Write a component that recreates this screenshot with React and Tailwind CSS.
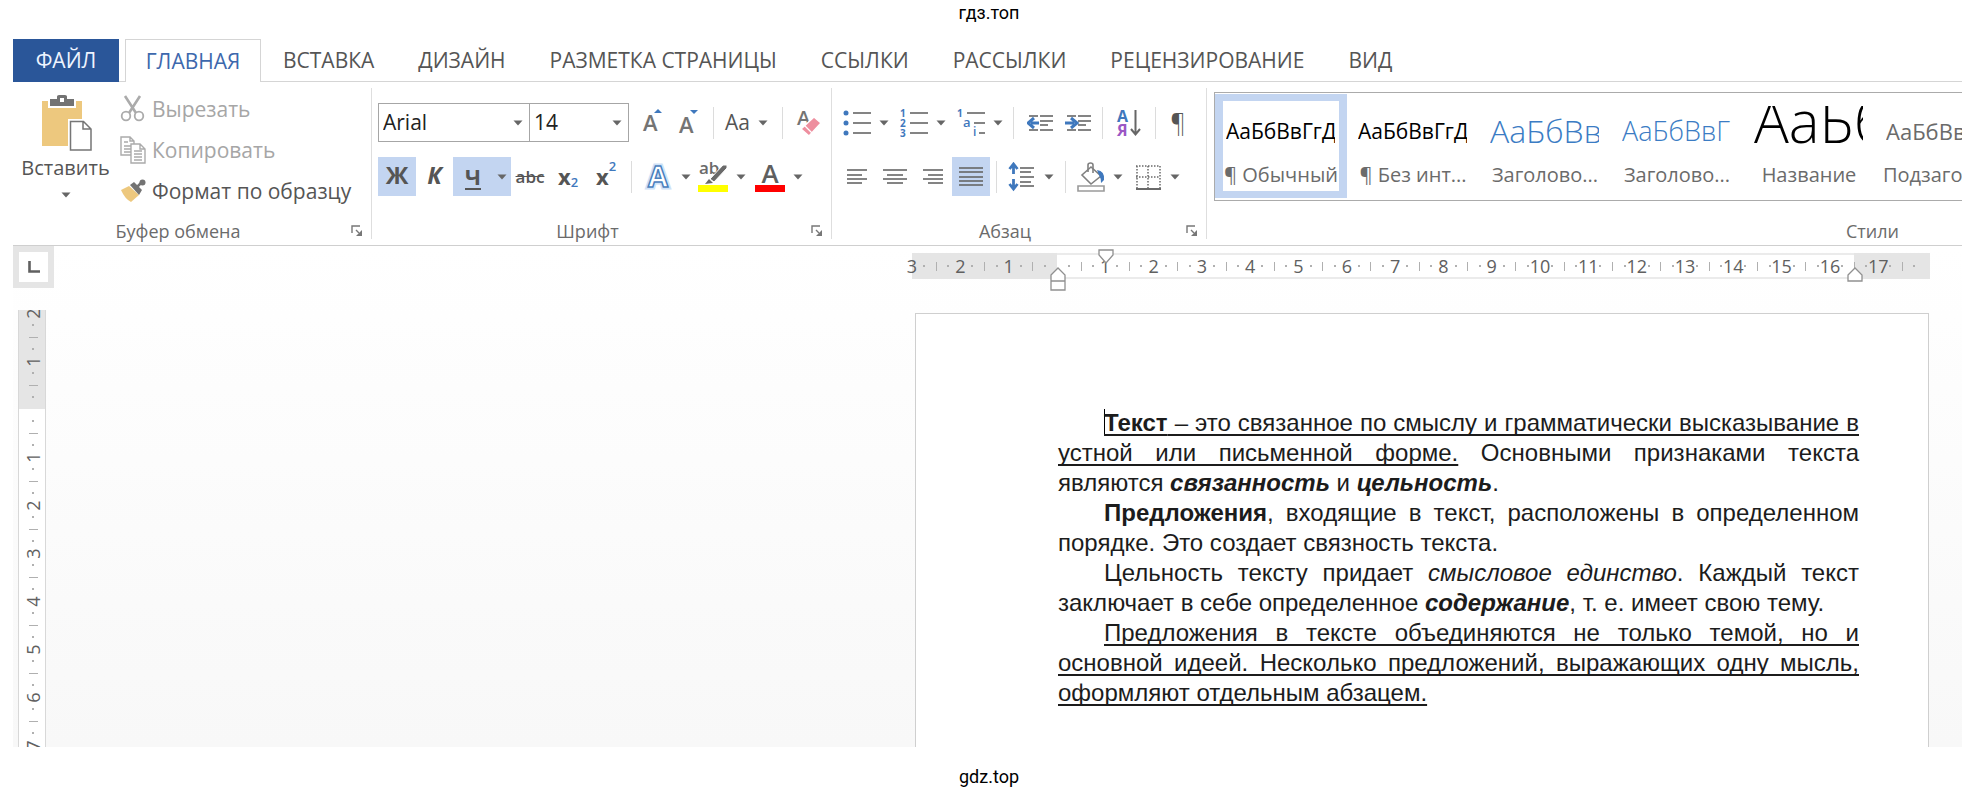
import clsx from "clsx";

const blue = "#3f78bd";
const ink = "#666666";

const tabs = ["ВСТАВКА", "ДИЗАЙН", "РАЗМЕТКА СТРАНИЦЫ", "ССЫЛКИ", "РАССЫЛКИ", "РЕЦЕНЗИРОВАНИЕ", "ВИД"];

const styles = [
  { name: "¶ Обычный", preview: "text-[21px] leading-[50px] text-black", selected: true },
  { name: "¶ Без инт...", preview: "text-[21px] leading-[50px] text-black" },
  { name: "Заголово...", preview: "text-[32px] leading-[50px] font-light text-[#3b7cc4]" },
  { name: "Заголово...", preview: "text-[27px] leading-[50px] font-light text-[#3b7cc4]" },
  { name: "Название", preview: "text-[58px] leading-[30px] font-light text-black" },
  { name: "Подзаголовок", preview: "text-[22px] leading-[50px] text-[#6b6b6b]" },
];

function Arrow({ className }) {
  return (
    <svg width="10" height="6" viewBox="0 0 10 6" className={clsx("shrink-0", className)} aria-hidden="true">
      <path d="M0.5 0.5h9L5 5.5z" fill={ink} />
    </svg>
  );
}

function Separator({ className = "mx-[6px]" }) {
  return <div className={clsx("h-8 w-px shrink-0 bg-[#dcdcdc]", className)} />;
}

function Tool({ label, active, wide, className = "w-[38px]", children }) {
  return (
    <button
      type="button"
      aria-label={label}
      className={clsx(
        "flex h-[39px] shrink-0 items-center text-[#555]",
        wide ? "gap-2 pl-[5px]" : "justify-center",
        active && "bg-[#c3d5f1]",
        className
      )}
    >
      {children}
      {wide && <Arrow />}
    </button>
  );
}

function Group({ label, className, bodyClass, children }) {
  return (
    <section className={clsx("flex h-[151px] shrink-0 flex-col border-r border-[#dedede]", className)}>
      <div className={clsx("flex-1", bodyClass)}>{children}</div>
      <div className="flex h-4 items-center">
        <span className="flex-1 text-center text-[18px] leading-6 text-[#6b6b6b]">{label}</span>
        <button type="button" aria-label={`${label}: параметры`} className="flex w-7 justify-center">
          <svg width="12" height="12" viewBox="0 0 12 12" fill="none" stroke="#777" strokeWidth="1.4">
            <path d="M1 8V1h8M5 5l3 3" />
            <path d="M11 5v6H5z" fill="#777" stroke="none" />
          </svg>
        </button>
      </div>
    </section>
  );
}

function Combo({ label, value, className }) {
  return (
    <div className={clsx("relative h-[39px] shrink-0 border border-[#a6a6a6] bg-white", className)}>
      <select
        aria-label={label}
        defaultValue={value}
        className="h-full w-full appearance-none bg-transparent pl-1 text-[21px] text-[#222] outline-none"
      >
        <option>{value}</option>
      </select>
      <Arrow className="pointer-events-none absolute right-[6px] top-4" />
    </div>
  );
}

/* Horizontal strokes: [x1, x2, y] */
function Lines({ rows, width = 28, height = 30, children }) {
  return (
    <svg width={width} height={height} viewBox={`0 0 ${width} ${height}`} aria-hidden="true">
      {rows.map(([a, b, y]) => (
        <path key={`${a}-${y}`} d={`M${a} ${y}H${b}`} stroke={ink} strokeWidth="1.6" />
      ))}
      {children}
    </svg>
  );
}

function PasteIcon() {
  return (
    <svg width="52" height="58" viewBox="0 0 52 58" aria-hidden="true">
      <path d="M2 7h40v45H2z" fill="#edc87e" />
      <path d="M8 4h28v10H8z" fill="#fff" />
      <path d="M10 5h7V2.500q0-1.500 2-1.500h6q2 0 2 1.500V5h7v7H10z" fill="#737373" />
      <path d="M20 4h4v4h-4z" fill="#fff" />
      <path d="M28 25h17l7 8v25H28z" fill="#fff" />
      <path d="M30.500 27.500h13l7.500 7.500v21h-20.500zM43 27.500V35h8" fill="#fff" stroke="#767676" strokeWidth="1.500" />
    </svg>
  );
}

function CutIcon() {
  return (
    <svg width="26" height="27" viewBox="0 0 26 27" fill="none" stroke="#ababab" aria-hidden="true">
      <path d="M5 1l11 17M20 1L9 18" strokeWidth="2.600" />
      <circle cx="6" cy="21" r="4.300" strokeWidth="1.800" />
      <circle cx="19" cy="21" r="4.300" strokeWidth="1.800" />
    </svg>
  );
}

function CopyIcon() {
  return (
    <svg width="26" height="28" viewBox="0 0 26 28" fill="#fff" stroke="#ababab" strokeWidth="1.400" aria-hidden="true">
      <path d="M1 1h9l4 4v14H1zM10 1v4h4M4 6h4M4 10h7M4 13h7M4 16h7" />
      <path d="M11 8h9l5 5v14H11zM20 8v5h5M14 15h8M14 18h8M14 21h8M14 24h8" />
    </svg>
  );
}

function BrushIcon() {
  return (
    <svg width="26" height="24" viewBox="0 0 26 24" aria-hidden="true">
      <path d="M1 11l8-4 10 9-8 7q-6-3-10-12z" fill="#edc87e" />
      <path d="M10 6l4-3 8 8-3 5z" fill="#737373" />
      <path d="M17 8l5-5" stroke="#737373" strokeWidth="2.500" />
      <circle cx="22.500" cy="3.500" r="3" fill="#737373" />
    </svg>
  );
}

function FontSizeIcon({ up }) {
  return (
    <svg width="24" height="30" viewBox="0 0 24 30" aria-hidden="true">
      <text x="2" y={up ? 23 : 25} fontSize="22" fontWeight="600" fill="#747474">А</text>
      <path d={up ? "M13 5h8l-4-4z" : "M13 2h8l-4 4z"} fill={blue} />
    </svg>
  );
}

function EraserIcon() {
  return (
    <svg width="26" height="30" viewBox="0 0 26 30" aria-hidden="true">
      <text x="1" y="17" fontSize="20" fontWeight="600" fill="#747474">А</text>
      <path d="M5 21L18 9l7 6-12 13z" fill="#ee8f9f" stroke="#fff" strokeWidth="1.500" />
      <path d="M8 17l8 8" stroke="#fff" strokeWidth="1.200" />
    </svg>
  );
}

function TextEffectsIcon() {
  return (
    <svg width="30" height="32" viewBox="0 0 30 32" aria-hidden="true">
      <text x="15" y="26" textAnchor="middle" fontSize="29" fontWeight="700" fill="#fff" stroke="#cfe2f7" strokeWidth="5">А</text>
      <text x="15" y="26" textAnchor="middle" fontSize="29" fontWeight="700" fill="#fff" stroke="#4a80bd" strokeWidth="1.500">А</text>
    </svg>
  );
}

function HighlightIcon() {
  return (
    <svg width="30" height="32" viewBox="0 0 30 32" aria-hidden="true">
      <text x="1" y="13" fontSize="17" fontWeight="600" fill="#6a6a6a">ab</text>
      <path d="M12 18L25 4h4v3L16 21z" fill="#6a6a6a" stroke="#fff" strokeWidth="1" />
      <path d="M11 18l4 4-8 1z" fill="#6a6a6a" />
      <path d="M0 24h30v7H0z" fill="#ffff00" />
    </svg>
  );
}

function FontColorIcon() {
  return (
    <svg width="30" height="32" viewBox="0 0 30 32" aria-hidden="true">
      <text x="15" y="22" textAnchor="middle" fontSize="26" fontWeight="600" fill="#5f5f5f">А</text>
      <path d="M0 24h30v7H0z" fill="#ff0000" />
    </svg>
  );
}

const listRows = [[10, 28, 5], [10, 28, 15], [10, 28, 25]];

function BulletsIcon() {
  return (
    <Lines rows={listRows}>
      {[5, 15, 25].map((y) => <circle key={y} cx="3" cy={y} r="2.500" fill={blue} />)}
    </Lines>
  );
}

function NumbersIcon() {
  return (
    <Lines rows={listRows}>
      {[1, 2, 3].map((n) => (
        <text key={n} x="0" y={n * 10 - 1} fontSize="10" fontWeight="700" fill={blue}>{n}</text>
      ))}
    </Lines>
  );
}

function MultilevelIcon() {
  return (
    <Lines rows={[[10, 28, 5], [17, 28, 15], [22, 28, 25]]}>
      <text x="0" y="9" fontSize="10" fontWeight="700" fill={blue}>1</text>
      <text x="6" y="19" fontSize="13" fontWeight="600" fill={blue}>a</text>
      <text x="16" y="28" fontSize="12" fontWeight="600" fill={blue}>i</text>
    </Lines>
  );
}

function IndentIcon({ right }) {
  return (
    <Lines width={28} height={20} rows={[[2, 11, 3], [13, 26, 3], [13, 26, 8], [13, 21, 12], [2, 11, 17], [13, 26, 17]]}>
      <path
        d={right ? "M0 10h9M6 5l6 5-6 5" : "M12 10H4M7 5l-6 5 6 5"}
        fill="none"
        stroke={blue}
        strokeWidth="3"
      />
    </Lines>
  );
}

function SortIcon() {
  return (
    <svg width="26" height="30" viewBox="0 0 26 30" aria-hidden="true">
      <text x="1" y="14" fontSize="16" fontWeight="700" fill={blue}>А</text>
      <text x="1" y="28" fontSize="16" fontWeight="700" fill="#9a57c4">Я</text>
      <path d="M19.500 2v24M15 21l4.500 5.500L24 21" fill="none" stroke={ink} strokeWidth="2" />
    </svg>
  );
}

function SpacingIcon() {
  return (
    <Lines rows={[[12, 26, 6], [12, 23, 10], [12, 26, 15], [12, 23, 20], [12, 26, 24]]}>
      <path d="M5.500 2v10M1.500 7l4-5 4 5M5.500 17v10M1.500 22l4 5 4-5" fill="none" stroke={blue} strokeWidth="2.800" />
    </Lines>
  );
}

function BucketIcon() {
  return (
    <svg width="28" height="32" viewBox="0 0 28 32" fill="none" aria-hidden="true">
      <path d="M14 6l10 9-10 8-9-9z" fill="#fff" stroke="#808080" strokeWidth="1.600" />
      <path d="M11 11V4q0-2 2.500-2T16 4v8" stroke="#808080" strokeWidth="1.600" />
      <path d="M20 9q8 1 7 10l-3 3q0-5-2-8z" fill={blue} />
      <path d="M1 25h26v5H1z" fill="#fff" stroke="#9a9a9a" strokeWidth="1.600" />
    </svg>
  );
}

function BordersIcon() {
  return (
    <svg width="28" height="28" viewBox="0 0 28 28" fill="none" stroke="#6a6a6a" strokeWidth="1.500" aria-hidden="true">
      <path d="M2 3h24M2 14h24M3 3v22M14 3v22M26 3v22" strokeDasharray="1.500 1.500" />
      <path d="M2 26h25" strokeWidth="2" />
    </svg>
  );
}

const alignRows = {
  left: [[4, 24, 8], [4, 19, 13], [4, 24, 17], [4, 19, 21]],
  center: [[2, 26, 8], [6, 22, 13], [2, 26, 17], [6, 22, 21]],
  right: [[4, 24, 8], [9, 24, 13], [4, 24, 17], [9, 24, 21]],
  justify: [[2, 26, 6], [2, 26, 10], [2, 26, 15], [2, 26, 19], [2, 26, 23]],
};

function Tabs() {
  return (
    <nav className="flex h-[43px] items-stretch whitespace-nowrap text-[21px] leading-[42px] text-[#555]">
      <a href="#file" className="w-[106px] bg-[#2a5699] text-center text-[#eef4ff]">ФАЙЛ</a>
      <div className="w-[6px] border-b border-[#d5d5d5]" />
      <a href="#home" className="w-[136px] border border-b-0 border-[#d5d5d5] text-center text-[#3d68ad]">ГЛАВНАЯ</a>
      <div className="flex flex-1 gap-11 border-b border-[#d5d5d5] pl-[22px]">
        {tabs.map((t) => <a key={t} href="#tab">{t}</a>)}
      </div>
    </nav>
  );
}

function Clipboard() {
  return (
    <Group label="Буфер обмена" className="w-[359px]">
      <div className="flex">
        <button type="button" className="flex w-[105px] flex-col items-center pt-[6px] text-[20px] leading-6 text-[#555]">
          <PasteIcon />
          <span className="mt-1">Вставить</span>
          <Arrow className="mt-3" />
        </button>
        <div className="flex flex-col text-[21px] leading-6">
          {[
            ["Вырезать", <CutIcon />, "text-[#a6a6a6]"],
            ["Копировать", <CopyIcon />, "text-[#a6a6a6]"],
            ["Формат по образцу", <BrushIcon />, "text-[#555]"],
          ].map(([text, icon, color]) => (
            <button key={text} type="button" className={clsx("flex h-[41px] items-center gap-[6px] pl-[2px]", color)}>
              {icon}
              {text}
            </button>
          ))}
        </div>
      </div>
    </Group>
  );
}

function FontGroup() {
  return (
    <Group label="Шрифт" className="w-[460px]" bodyClass="pl-[6px]">
      <div className="flex items-center pt-[15px]">
        <Combo label="Шрифт" value="Arial" className="w-[152px]" />
        <Combo label="Размер шрифта" value="14" className="w-[99px] border-l-0" />
        <div className="w-[6px]" />
        <Tool label="Увеличить размер" className="w-9"><FontSizeIcon up /></Tool>
        <Tool label="Уменьшить размер" className="w-9"><FontSizeIcon /></Tool>
        <Separator />
        <Tool label="Регистр" wide className="w-14 text-[21px]">Аа</Tool>
        <Separator />
        <Tool label="Очистить форматирование" className="w-10"><EraserIcon /></Tool>
      </div>
      <div className="flex items-center pt-[15px]">
        <Tool active className="w-[38px] pb-1 text-[24px] leading-8 font-bold">Ж</Tool>
        <Tool className="w-[37px] pb-1 text-[24px] leading-8 font-bold italic">К</Tool>
        <Tool label="Подчеркнутый" active className="w-[58px] gap-4 pl-2 text-[22px] font-bold">
          <span className="border-b-2 border-[#555] leading-6">Ч</span>
          <Arrow />
        </Tool>
        <Tool className="w-[38px] text-[17px] font-semibold line-through">abc</Tool>
        <Tool label="Подстрочный" className="w-[38px] text-[22px] font-bold">
          x<span className="self-end pb-1 text-[13px] font-semibold text-[#3f78bd]">2</span>
        </Tool>
        <Tool label="Надстрочный" className="w-[38px] text-[22px] font-bold">
          x<span className="self-start text-[13px] font-semibold text-[#3f78bd]">2</span>
        </Tool>
        <Separator />
        <Tool label="Текстовые эффекты" wide className="w-[55px]"><TextEffectsIcon /></Tool>
        <Tool label="Цвет выделения" wide className="w-[57px]"><HighlightIcon /></Tool>
        <Tool label="Цвет текста" wide className="w-[57px]"><FontColorIcon /></Tool>
      </div>
    </Group>
  );
}

function ParagraphGroup() {
  return (
    <Group label="Абзац" className="w-[375px]" bodyClass="pl-[6px]">
      <div className="flex items-center pt-[15px]">
        <Tool label="Маркеры" wide className="w-[57px]"><BulletsIcon /></Tool>
        <Tool label="Нумерация" wide className="w-[57px]"><NumbersIcon /></Tool>
        <Tool label="Многоуровневый список" wide className="w-[57px]"><MultilevelIcon /></Tool>
        <Separator className="ml-1 mr-2" />
        <Tool label="Уменьшить отступ"><IndentIcon /></Tool>
        <Tool label="Увеличить отступ"><IndentIcon right /></Tool>
        <Separator className="mx-1" />
        <Tool label="Сортировка" className="w-11"><SortIcon /></Tool>
        <Separator className="mx-1" />
        <Tool className="w-9 text-[25px] font-light">¶</Tool>
      </div>
      <div className="flex items-center pt-[15px]">
        <Tool label="По левому краю"><Lines rows={alignRows.left} /></Tool>
        <Tool label="По центру"><Lines rows={alignRows.center} /></Tool>
        <Tool label="По правому краю"><Lines rows={alignRows.right} /></Tool>
        <Tool label="По ширине" active><Lines rows={alignRows.justify} /></Tool>
        <Separator />
        <Tool label="Интервал" wide className="w-14"><SpacingIcon /></Tool>
        <Separator />
        <Tool label="Заливка" wide className="w-[57px]"><BucketIcon /></Tool>
        <Tool label="Границы" wide className="w-[57px]"><BordersIcon /></Tool>
      </div>
    </Group>
  );
}

/* The gallery runs on past the right edge of the window */
function StylesGroup() {
  return (
    <div className="min-w-0 flex-1 overflow-hidden">
      <Group label="Стили" className="w-[1360px]" bodyClass="pl-[7px] pt-1">
        <div className="flex h-[109px] border border-[#ababab] pt-px">
          {styles.map((s, i) => (
            <button
              key={i}
              type="button"
              className={clsx(
                "flex h-[104px] w-[132px] shrink-0 flex-col border-x-8 border-y-[7px] whitespace-nowrap",
                s.selected ? "border-[#c3d5f1]" : "border-transparent"
              )}
            >
              <span className={clsx("mt-[5px] ml-[3px] h-11 w-[109px] shrink-0 overflow-hidden text-left", s.preview)}>
                АаБбВвГгДд
              </span>
              <span className="mt-[9px] w-full text-center text-[20px] leading-8 text-[#6b6b6b]">{s.name}</span>
            </button>
          ))}
        </div>
      </Group>
    </div>
  );
}

/* One slot per quarter centimetre, each mark centred on the slot's start */
function Mark({ quarter, vertical }) {
  const n = Math.abs(quarter / 4);
  const number = quarter % 4 === 0;
  if (number) return n === 0 ? null : <span className={vertical ? "-rotate-90" : undefined}>{n}</span>;
  const half = quarter % 2 === 0;
  return (
    <span
      className={clsx(
        "shrink-0 bg-[#b0b0b0]",
        half && (vertical ? "h-px w-[9px]" : "h-[9px] w-px"),
        !half && "size-[2px]"
      )}
    />
  );
}

function HorizontalRuler() {
  const quarters = Array.from({ length: 84 }, (_, i) => i - 12);
  return (
    <div className="relative flex h-[26px] text-[18px] text-[#606060]">
      {quarters.map((q) => (
        <div
          key={q}
          className={clsx("flex flex-1 items-center", q < 0 || q >= 66 ? "bg-[#e5e5e5]" : "border-y-2 border-[#ebebeb] bg-white")}
        >
          <div className="z-1 flex w-0 items-center justify-center">
            <Mark quarter={q} />
          </div>
        </div>
      ))}
      <div className="w-[3px] bg-[#e5e5e5]" />
      <svg width="16" height="15" viewBox="0 0 16 15" className="absolute -top-[4px] left-[186px] z-2" aria-hidden="true">
        <path d="M1 1h14v5l-7 8-7-8z" fill="#fff" stroke="#909090" strokeWidth="1.300" />
      </svg>
      <svg width="16" height="24" viewBox="0 0 16 24" className="absolute left-[138px] top-[14px] z-2" aria-hidden="true">
        <path d="M1 8l7-7 7 7v15H1zM1 14h14" fill="#fff" stroke="#909090" strokeWidth="1.300" />
      </svg>
      <svg width="16" height="15" viewBox="0 0 16 15" className="absolute left-[935px] top-[14px] z-2" aria-hidden="true">
        <path d="M1 8l7-7 7 7v6H1z" fill="#fff" stroke="#909090" strokeWidth="1.300" />
      </svg>
    </div>
  );
}

function VerticalRuler() {
  const quarters = Array.from({ length: 37 }, (_, i) => i - 8);
  return (
    <div className="ml-[5px] flex h-[438px] w-7 flex-col overflow-hidden border-x border-[#d8d8d8] bg-white text-[18px] text-[#606060]">
      <div className="h-[3px] shrink-0 bg-[#e5e5e5]" />
      {quarters.map((q) => (
        <div key={q} className={clsx("flex h-3 shrink-0 flex-col items-center", q < 0 && "bg-[#e5e5e5]")}>
          <div className="z-1 flex h-0 items-center justify-center pl-[2px]">
            <Mark quarter={q} vertical />
          </div>
        </div>
      ))}
    </div>
  );
}

function Underlined({ children }) {
  return <u className="decoration-2 underline-offset-3 [text-decoration-skip-ink:none]">{children}</u>;
}

function Page() {
  return (
    <article className="ml-[3px] flex-1 border border-b-0 border-[#cfcfcf] bg-white pl-[142px] pr-[69px] pt-[94px] text-justify indent-[46px] font-['Liberation_Sans',sans-serif] text-[24px] leading-[30px] text-[#1c1c1c]">
      <p>
        <span className="-mr-px border-l border-black" />
        <Underlined>
          <b>Текст</b> – это связанное по смыслу и грамматически высказывание в устной или письменной форме.
        </Underlined>{" "}
        Основными признаками текста являются <b><i>связанность</i></b> и <b><i>цельность</i></b>.
      </p>
      <p>
        <b>Предложения</b>, входящие в текст, расположены в определенном порядке. Это создает связность текста.
      </p>
      <p>
        Цельность тексту придает <i>смысловое единство</i>. Каждый текст заключает в себе определенное{" "}
        <b><i>содержание</i></b>, т. е. имеет свою тему.
      </p>
      <p>
        <Underlined>
          Предложения в тексте объединяются не только темой, но и основной идеей. Несколько предложений,
          выражающих одну мысль, оформляют отдельным абзацем.
        </Underlined>
      </p>
    </article>
  );
}

export default function App() {
  return (
    <div className="flex flex-col bg-white font-['Open_Sans','Noto_Sans',sans-serif]">
      <header className="h-[39px] text-center font-[Roboto,sans-serif] text-[18px] leading-[26px] text-black">гдз.топ</header>

      <main className="ml-[13px] mr-[16px]">
        <Tabs />
        <div className="flex border-b border-[#cfcfcf] pb-[6px] pt-[6px]">
          <Clipboard />
          <FontGroup />
          <ParagraphGroup />
          <StylesGroup />
        </div>

        <div className="flex h-[501px] justify-between overflow-hidden bg-linear-to-b from-white to-[#f8f8f8]">
          <div>
            <button type="button" aria-label="Табуляция" className="mb-[22px] flex h-[42px] w-[41px] items-center justify-center border-[6px] border-[#e5e5e5] bg-white">
              <svg width="12" height="12" viewBox="0 0 12 12" aria-hidden="true">
                <path d="M1.500 0v10.500H12" fill="none" stroke="#606060" strokeWidth="2.600" />
              </svg>
            </button>
            <VerticalRuler />
          </div>
          <div className="mr-[33px] flex w-[1017px] flex-col pt-[7px]">
            <HorizontalRuler />
            <div className="flex flex-1 pt-[34px]">
              <Page />
            </div>
          </div>
        </div>
      </main>

      <footer className="h-[50px] text-center font-[Roboto,sans-serif] text-[18px] leading-[60px] text-black">gdz.top</footer>
    </div>
  );
}
